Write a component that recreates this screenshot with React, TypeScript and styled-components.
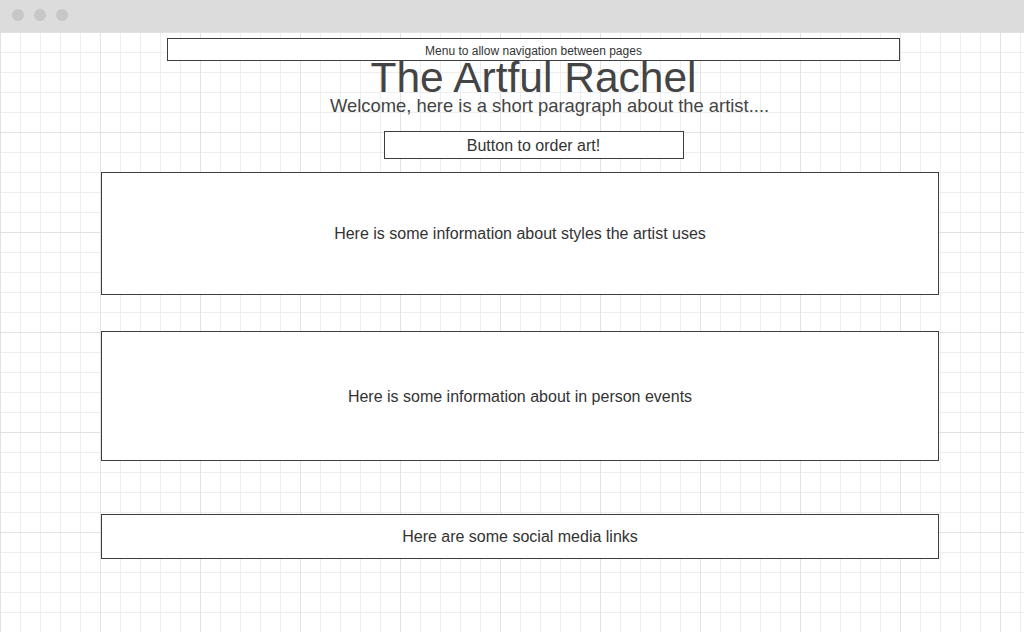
import * as React from 'react';
import styled, { createGlobalStyle } from 'styled-components';

const GlobalStyle = createGlobalStyle`
  html, body{
    margin: 0;
    padding: 0;
    background: #ffffff;
  }

  body{
    font-family: "Liberation Sans", Arial, sans-serif;
    color: #333333;
  }
`;

const StyledWindow = styled.div`
  display: flex;
  flex-direction: column;
  min-height: 100vh;
`;

const StyledChrome = styled.div`
  display: flex;
  align-items: center;
  gap: 10px;
  height: 32px;
  padding: 0 0 2px 12px;
  box-sizing: border-box;
  background: #dcdcdc;
  flex-shrink: 0;
`;

const Dot = styled.span`
  width: 12px;
  height: 12px;
  border-radius: 50%;
  background: #c7c7c7;
`;

const StyledCanvas = styled.main`
  flex: 1;
  background-color: #ffffff;
  background-image:
    linear-gradient(to right, #e2e2e2 1px, transparent 1px),
    linear-gradient(to bottom, #e2e2e2 1px, transparent 1px),
    linear-gradient(to right, #eeeeee 1px, transparent 1px),
    linear-gradient(to bottom, #eeeeee 1px, transparent 1px);
  background-size: 100px 100px, 100px 100px, 20px 20px, 20px 20px;
  background-position: 0 0;
`;

const StyledHeader = styled.header`
  display: flex;
  flex-direction: column;
  align-items: center;
  padding: 6px 124px 0 167px;
`;

const StyledMenu = styled.nav`
  align-self: stretch;
  height: 23px;
  display: flex;
  align-items: center;
  justify-content: center;
  box-sizing: border-box;
  border: 1px solid #3d3d3d;
  background: #ffffff;
  font-size: 12px;
  padding-top: 2px;
  color: #333333;
`;

// the title sits right under the menu and runs into it, as in the mockup
const Title = styled.h1`
  margin: 0;
  font-size: 42.5px;
  line-height: 34px;
  font-weight: normal;
  color: #444444;
  white-space: nowrap;
`;

const Intro = styled.p`
  margin: 2px 0 0 32px;
  font-size: 18.4px;
  line-height: 18px;
  color: #444444;
  white-space: nowrap;
`;

const OrderButton = styled.button`
  margin-top: 16px;
  width: 300px;
  height: 28px;
  box-sizing: border-box;
  border: 1px solid #3d3d3d;
  background: #ffffff;
  font-family: inherit;
  font-size: 16px;
  color: #333333;
  padding: 1px 0 0;
  cursor: pointer;
`;

const StyledSections = styled.div`
  display: flex;
  flex-direction: column;
  padding: 13px 85px 0 101px;
`;

const InfoBox = styled.section<{ $height: number; $gap: number }>`
  height: ${(p) => p.$height}px;
  margin-top: ${(p) => p.$gap}px;
  box-sizing: border-box;
  border: 1px solid #3d3d3d;
  background: #ffffff;
  display: flex;
  align-items: center;
  justify-content: center;
  font-size: 16px;
  color: #333333;
  padding-top: 1px;
`;

const App: React.FC = () => {
  return (
    <StyledWindow>
      <GlobalStyle />
      <StyledChrome>
        <Dot />
        <Dot />
        <Dot />
      </StyledChrome>
      <StyledCanvas>
        <StyledHeader>
          <StyledMenu>Menu to allow navigation between pages</StyledMenu>
          <Title>The Artful Rachel</Title>
          <Intro>Welcome, here is a short paragraph about the artist....</Intro>
          <OrderButton>Button to order art!</OrderButton>
        </StyledHeader>
        <StyledSections>
          <InfoBox $height={123} $gap={0}>
            Here is some information about styles the artist uses
          </InfoBox>
          <InfoBox $height={130} $gap={36}>
            Here is some information about in person events
          </InfoBox>
          <InfoBox $height={45} $gap={53}>
            Here are some social media links
          </InfoBox>
        </StyledSections>
      </StyledCanvas>
    </StyledWindow>
  );
};

export default App;
